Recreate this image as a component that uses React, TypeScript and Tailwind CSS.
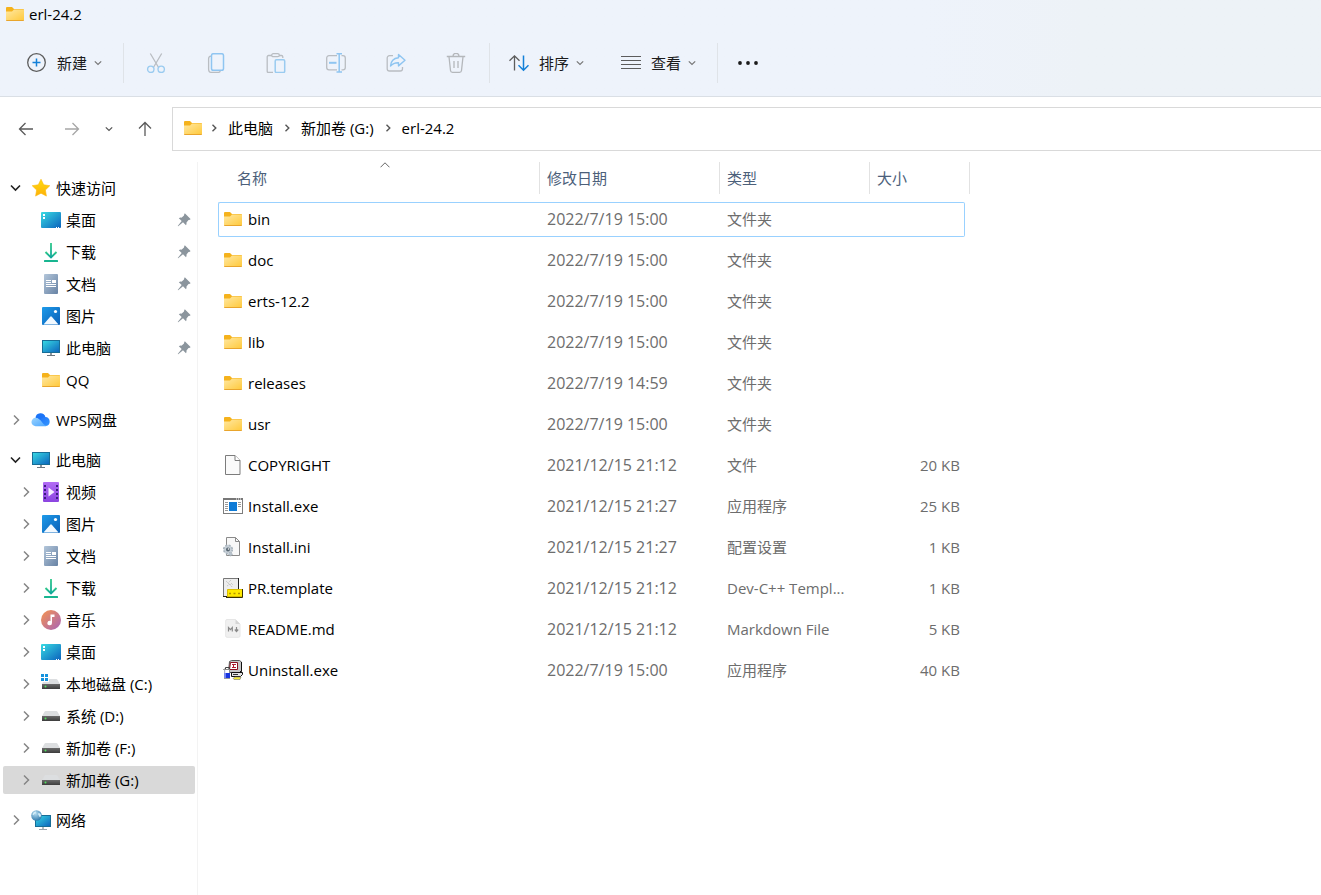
import type { ReactNode } from "react";
import clsx from "clsx";

type IconProps = { className?: string };

type SvgProps = IconProps & { children: ReactNode; size?: number };

function Svg({ children, className, size = 20 }: SvgProps) {
  return (
    <svg
      viewBox={`0 0 ${size} ${size}`}
      width={size}
      height={size}
      fill="none"
      aria-hidden="true"
      className={clsx("shrink-0", className)}
    >
      {children}
    </svg>
  );
}

/* Shared gradients, referenced by id from the icons below */
function Gradients() {
  return (
    <svg width="0" height="0" className="absolute" aria-hidden="true">
      <defs>
        <linearGradient id="folder" x1="0" y1="0" x2="1" y2="1">
          <stop offset="0" stopColor="#ffe8a3" />
          <stop offset="1" stopColor="#ffca3e" />
        </linearGradient>
        <linearGradient id="screen" x1="0" y1="0" x2="1" y2="1">
          <stop offset="0" stopColor="#38dbe3" />
          <stop offset="1" stopColor="#0c62bd" />
        </linearGradient>
        <linearGradient id="star" x1="0" y1="0" x2="0" y2="1">
          <stop offset="0" stopColor="#ffdc0c" />
          <stop offset="1" stopColor="#fdb00a" />
        </linearGradient>
        <linearGradient id="download" x1="0" y1="0" x2="0" y2="1">
          <stop offset="0" stopColor="#2fc98a" />
          <stop offset="1" stopColor="#0fa69a" />
        </linearGradient>
        <linearGradient id="doc" x1="0" y1="0" x2="1" y2="1">
          <stop offset="0" stopColor="#b3c6da" />
          <stop offset="1" stopColor="#6782a4" />
        </linearGradient>
        <linearGradient id="picture" x1="0" y1="0" x2="1" y2="1">
          <stop offset="0" stopColor="#1d9bea" />
          <stop offset="1" stopColor="#0b5fb6" />
        </linearGradient>
        <linearGradient id="video" x1="0" y1="0" x2="0" y2="1">
          <stop offset="0" stopColor="#b26cf5" />
          <stop offset="1" stopColor="#8b44e0" />
        </linearGradient>
        <linearGradient id="music" x1="0" y1="0" x2="1" y2="1">
          <stop offset="0" stopColor="#f6944f" />
          <stop offset="1" stopColor="#a763b8" />
        </linearGradient>
        <linearGradient id="cloud" x1="0" y1="0" x2="1" y2="1">
          <stop offset="0" stopColor="#1566f5" />
          <stop offset="1" stopColor="#3597ff" />
        </linearGradient>
        <linearGradient id="cloudLight" x1="0" y1="0" x2="1" y2="1">
          <stop offset="0" stopColor="#9ad4ff" />
          <stop offset="1" stopColor="#4aa5ff" />
        </linearGradient>
        <linearGradient id="drive" x1="0" y1="0" x2="0" y2="1">
          <stop offset="0" stopColor="#6a6a6a" />
          <stop offset="1" stopColor="#3c3c3c" />
        </linearGradient>
        <radialGradient id="globe" cx="0.4" cy="0.3" r="0.8">
          <stop offset="0" stopColor="#b9dff2" />
          <stop offset="1" stopColor="#1f6ea5" />
        </radialGradient>
      </defs>
    </svg>
  );
}

function FolderIcon({ className }: IconProps) {
  return (
    <Svg className={className}>
      <path d="M1 4a1 1 0 0 1 1-1h5l2 2h9a1 1 0 0 1 1 1v2H1z" fill="#f5b21c" />
      <path d="M1 7.5h6L9 5.5h9.5a.5.5 0 0 1 .5.5V16H1z" fill="url(#folder)" />
      <path d="M1 16h18v.2a.8.8 0 0 1-.8.8H1.8a.8.8 0 0 1-.8-.8z" fill="#e9a52c" />
    </Svg>
  );
}

function StarIcon() {
  return (
    <Svg>
      <path
        d="M10 1.2l2.7 5.6 6.1.9-4.400 4.300 1 6.100-5.400-2.900-5.400 2.900 1-6.100L1.200 7.700l6.100-.9z"
        fill="url(#star)"
        stroke="#fcb90b"
        strokeWidth="0.6"
        strokeLinejoin="round"
      />
    </Svg>
  );
}

function DesktopIcon() {
  return (
    <Svg>
      <rect x="0" y="2" width="20" height="16" rx="1" fill="url(#screen)" />
      <path d="M2 4h2v2H2zM2 7h2v2H2z" fill="#fff" />
      <path d="M15 17.500h1M17 17.500h1" stroke="#fff" />
    </Svg>
  );
}

function DownloadIcon() {
  return (
    <Svg>
      <path d="M4.500 10L10 15.500 15.500 10" stroke="url(#download)" strokeWidth="1.900" />
      <path d="M9.100 1h1.800v14H9.100z" fill="url(#download)" />
      <rect x="3" y="18" width="14" height="2" rx="0.500" fill="#18b590" />
    </Svg>
  );
}

function DocumentIcon() {
  return (
    <Svg>
      <rect x="3" y="0" width="14" height="20" rx="1" fill="url(#doc)" />
      <path d="M5 6.500h5M5 8.500h5M5 10.500h10M5 12.500h10" stroke="#fff" />
      <path d="M11 6h4v3h-4z" fill="#fff" />
    </Svg>
  );
}

function PictureIcon() {
  return (
    <Svg>
      <rect x="1" y="1" width="18" height="18" rx="1" fill="url(#picture)" />
      <path d="M2.500 18.500l6.700-7.700a1 1 0 0 1 1.600 0l6.700 7.700z" fill="#f2f9ff" />
      <circle cx="14.500" cy="5.500" r="1.600" fill="#fff" />
    </Svg>
  );
}

function ComputerIcon() {
  return (
    <Svg>
      <rect x="1.500" y="2.500" width="17" height="12" fill="url(#screen)" stroke="#176d96" />
      <path d="M9 15h2v2H9z" fill="#8b959d" />
      <path d="M6 17.500h8" stroke="#6b757d" />
    </Svg>
  );
}

function CloudIcon() {
  return (
    <Svg>
      <path d="M5 7.500A5 5 0 0 1 14.300 7a4.600 4.600 0 0 1 .7 9.100H9z" fill="url(#cloud)" />
      <path
        d="M4.800 16.200a4.200 4.200 0 0 1-.3-8.400c2.800-.2 4 1.200 5.600 3.200 1.800 2.300 3.200 4.600 6 4.700-1 .5-1.800.5-2.600.5z"
        fill="url(#cloudLight)"
      />
      <path d="M4.500 7.800A5 5 0 0 1 14.300 7c-2.500-.2-4 1-5.300 2.700C7.800 8.400 6.500 7.600 4.500 7.800z" fill="#1b74f7" />
    </Svg>
  );
}

function VideoIcon() {
  return (
    <Svg>
      <rect x="2" y="0" width="16" height="20" rx="1" fill="url(#video)" />
      <path d="M4 3v15M16 3v15" stroke="#3c1c80" strokeWidth="2" strokeDasharray="2 2" />
      <path d="M7.500 5.500v9l6-4.500z" fill="#f6efff" />
    </Svg>
  );
}

function MusicIcon() {
  return (
    <Svg>
      <circle cx="10" cy="10" r="10" fill="url(#music)" />
      <path d="M9.500 4.500h4V7H11v6a2.300 2.300 0 1 1-1.500-2.100z" fill="#fff" />
    </Svg>
  );
}

function DriveIcon() {
  return (
    <Svg>
      <path d="M4.500 5h11a1 1 0 0 1 .8.400L19 10H1l2.700-4.600A1 1 0 0 1 4.500 5z" fill="#dcdee0" />
      <rect x="1" y="10" width="18" height="5" fill="url(#drive)" />
      <circle cx="4.500" cy="12.500" r="1" fill="#4fe05c" />
    </Svg>
  );
}

function SystemDriveIcon() {
  return (
    <Svg>
      <path d="M8 5h7.500a1 1 0 0 1 .8.400L19 10H1l1-2h6z" fill="#dcdee0" />
      <rect x="1" y="10" width="18" height="5" fill="url(#drive)" />
      <circle cx="4.500" cy="12.500" r="1" fill="#4fe05c" />
      <path d="M0 0h3v3H0zM4 0h3v3H4zM0 4h3v3H0zM4 4h3v3H4z" fill="#1492dd" />
    </Svg>
  );
}

function NetworkIcon() {
  return (
    <Svg>
      <rect x="4.500" y="5.500" width="15" height="11" fill="url(#screen)" stroke="#176d96" />
      <path d="M11 17h2v2h-2z" fill="#b3bbc1" />
      <path d="M8 19.500h8" stroke="#9aa5ad" />
      <circle cx="5.500" cy="5.500" r="5.300" fill="url(#globe)" />
      <path d="M1.500 4.500c.5-2 2-3 3.500-3 .5 1-.5 2-1.500 2.500S3 6 1.500 4.500zM7.500 3c1.500 0 2.500 1 2.500 2.500S8.500 7.500 8 6s-1.500-1.500-.5-3z" fill="#d3ecf7" />
    </Svg>
  );
}

function PinIcon() {
  return (
    <Svg size={14} className="ml-auto mr-1">
      <path
        d="M8.300.7l5 5c.3.4.1.9-.3 1l-1.500.3-2 2.500c.2 1 0 1.900-.5 2.700L6 9.300l-4.800 4L.7 13l4-4.900-2.900-2.900c.8-.5 1.700-.7 2.700-.5L7 2.500 7.300 1c.1-.4.6-.6 1-.3z"
        fill="#8b959d"
      />
    </Svg>
  );
}

function ChevronRight({ className }: IconProps) {
  return (
    <Svg className={className}>
      <path d="M8 5.500l4.500 4.500L8 14.500" stroke="currentColor" strokeWidth="1.500" />
    </Svg>
  );
}

function ChevronDown({ className }: IconProps) {
  return (
    <Svg className={className}>
      <path d="M5 7.500L9.500 12 14 7.500" stroke="currentColor" strokeWidth="1.600" />
    </Svg>
  );
}

function SmallChevronDown({ className }: IconProps) {
  return (
    <Svg size={8} className={className}>
      <path d="M.8 2.300L4 5.500l3.200-3.200" stroke="currentColor" strokeWidth="1.200" />
    </Svg>
  );
}

function CrumbChevron() {
  return (
    <Svg size={8} className="text-[#555]">
      <path d="M2.500.8L5.800 4 2.500 7.200" stroke="currentColor" strokeWidth="1.400" />
    </Svg>
  );
}

/* Toolbar glyphs: grey outline, light blue accent */
function NewIcon() {
  return (
    <Svg>
      <circle cx="10.500" cy="9.500" r="8.800" stroke="#5c5c5c" strokeWidth="1.300" />
      <path d="M10.500 5.500v8M6.500 9.500h8" stroke="#1380d8" strokeWidth="1.500" />
    </Svg>
  );
}

function CutIcon() {
  return (
    <Svg>
      <path d="M4.300.5l8.300 14M15.700.5l-8.300 14" stroke="#b9bdc2" strokeWidth="1.300" />
      <circle cx="4.800" cy="16.300" r="3.200" stroke="#9acbf0" strokeWidth="1.400" />
      <circle cx="15.200" cy="16.300" r="3.200" stroke="#9acbf0" strokeWidth="1.400" />
    </Svg>
  );
}

function CopyIcon() {
  return (
    <Svg>
      <path d="M5 3.200c-1.600.2-2.400 1-2.400 2.500v10.500c0 2 1 3.200 3.200 3.200h6.500c1 0 1.700-.5 2-1.400" stroke="#b9bdc2" strokeWidth="1.300" />
      <rect x="5.500" y=".7" width="12" height="16.500" rx="1.800" stroke="#8fc5f1" strokeWidth="1.500" />
    </Svg>
  );
}

function PasteIcon() {
  return (
    <Svg>
      <path d="M6 2.500H2.500A1.300 1.300 0 0 0 1.200 3.800v14.400a1.300 1.300 0 0 0 1.300 1.300H7M13 2.500h2.500a1.300 1.300 0 0 1 1.300 1.200V5" stroke="#b9bdc2" strokeWidth="1.300" />
      <rect x="5.700" y=".7" width="7.600" height="3" rx="1.500" stroke="#b9bdc2" strokeWidth="1.300" />
      <rect x="9.200" y="6.700" width="9.500" height="12.800" rx="1.200" stroke="#9acbf0" strokeWidth="1.500" />
    </Svg>
  );
}

function RenameIcon() {
  return (
    <Svg>
      <path d="M11 2.700H3A2.300 2.300 0 0 0 .7 5v9.500A2.300 2.300 0 0 0 3 16.800h8M15.500 2.700H17A2.300 2.300 0 0 1 19.300 5v9.500a2.300 2.300 0 0 1-2.300 2.300h-1.500" stroke="#b9bdc2" strokeWidth="1.300" />
      <path d="M3 9.800h7.500" stroke="#8fc5f1" strokeWidth="2" />
      <path d="M10.500.7H16M10.500 19H16M13.200.7V19" stroke="#8fc5f1" strokeWidth="1.500" />
    </Svg>
  );
}

function ShareIcon() {
  return (
    <Svg>
      <path d="M7 2.700H3.500A2.300 2.300 0 0 0 1.200 5v10.700A2.300 2.300 0 0 0 3.500 18h10.700a2.300 2.300 0 0 0 2.300-2.300V14" stroke="#b9bdc2" strokeWidth="1.300" />
      <path
        d="M12.500 1.500L19 7.300l-6.500 5.600V9.700C9 9.500 6.700 10.500 4.500 13c.3-4.500 3-7.800 8-8.300z"
        stroke="#8fc5f1"
        strokeWidth="1.400"
        strokeLinejoin="round"
      />
    </Svg>
  );
}

function DeleteIcon() {
  return (
    <Svg>
      <path d="M.8 3.500h18.400M7 3.300a3 3 0 0 1 6 0M3 3.700l1.500 13.800a2 2 0 0 0 2 1.800h7a2 2 0 0 0 2-1.800L17 3.700M8 8v7M12 8v7" stroke="#b4b7bb" strokeWidth="1.300" />
    </Svg>
  );
}

function SortIcon() {
  return (
    <Svg>
      <path d="M5.500 17.500V2.800M.5 7.800l5-5 5 5" stroke="#5c5c5c" strokeWidth="1.300" />
      <path d="M14.500 2.500v14.700M9.500 12.200l5 5 5-5" stroke="#1380d8" strokeWidth="1.500" />
    </Svg>
  );
}

function ViewIcon() {
  return (
    <Svg>
      <path d="M0 3.500h20M0 7.500h20M0 11.500h20M0 15.500h20" stroke="#5c5c5c" />
    </Svg>
  );
}

function MoreIcon() {
  return (
    <Svg>
      <circle cx="2" cy="10" r="1.900" fill="#1b1b1b" />
      <circle cx="10" cy="10" r="1.900" fill="#1b1b1b" />
      <circle cx="18" cy="10" r="1.900" fill="#1b1b1b" />
    </Svg>
  );
}

function ArrowIcon({ className }: IconProps) {
  return (
    <Svg size={16} className={className}>
      <path d="M15 8H1.500M7.500 2l-6 6 6 6" stroke="currentColor" strokeWidth="1.300" />
    </Svg>
  );
}

/* File type icons */
function FileIcon() {
  return (
    <Svg>
      <path d="M2.500.5H12l5 5v14H2.500z" fill="#fafafa" stroke="#7c7c7c" />
      <path d="M12 .5v5h5" fill="#fff" stroke="#7c7c7c" />
    </Svg>
  );
}

function ExeIcon() {
  return (
    <Svg>
      <rect x=".5" y="2.500" width="19" height="15" fill="#fff" stroke="#7d7d7d" />
      <path d="M0 3h20" stroke="#777" strokeWidth="2" />
      <path d="M13 3h1M15 3h1M17 3h1" stroke="#fff" />
      <path d="M2 6.500h3M2 8.500h3M2 10.500h3M2 12.500h3M2 14.500h3M15 6.500h3M15 8.500h3M15 10.500h3" stroke="#999" />
      <rect x="6" y="6" width="8" height="9" fill="#0f7bd6" />
    </Svg>
  );
}

function IniIcon() {
  return (
    <Svg>
      <path d="M3.500.5h9l4 4v14h-13z" fill="#f8f8f8" stroke="#8a8a8a" />
      <path d="M12.500.5v4h4" stroke="#8a8a8a" />
      <circle cx="5" cy="12.500" r="4.300" fill="#c7d0d8" stroke="#a9b4bd" strokeWidth="1.600" strokeDasharray="2 1.400" />
      <circle cx="5" cy="12.500" r="2" fill="#566470" />
      <circle cx="5.500" cy="12" r=".8" fill="#fff" />
      <circle cx="7.500" cy="17" r="1.800" fill="#b9c4cd" stroke="#a4afb8" strokeDasharray="1 1" />
    </Svg>
  );
}

function TemplateIcon() {
  return (
    <Svg>
      <path d="M.5.5h15v18H.5z" fill="#ededed" stroke="#777" />
      <path d="M15.500 0v11M0 18.500h4" stroke="#222" />
      <path d="M3 3l2 2 3-3M5 5l3 3M4 8l3-2 2 3M8 5l2 2" stroke="#bcbcbc" strokeDasharray="1 1" />
      <path d="M4.500 11.500h15v7h-15z" fill="#ffea00" stroke="#d8bc00" />
      <path d="M19.500 11v8.500H3" stroke="#3c3300" />
      <path d="M6 15.500h2M10.500 15.500h2M15 15.500h2" stroke="#b39400" strokeWidth="1.400" />
    </Svg>
  );
}

function MarkdownIcon() {
  return (
    <Svg>
      <path d="M4 .5h8.500L17 5v12a1.300 1.300 0 0 1-1.300 1.300H4A1.300 1.300 0 0 1 2.700 17V1.800A1.300 1.300 0 0 1 4 .5z" fill="#f0f0f0" stroke="#e6e6e6" />
      <path d="M12.500.5V5H17z" fill="#d5d5d5" />
      <path d="M5.500 12.500v-4l1.900 2.200 1.900-2.200v4M13.500 8v4M11.800 10.500l1.700 2 1.700-2" stroke="#8a8a8a" strokeWidth="1.200" />
    </Svg>
  );
}

function UninstallIcon() {
  return (
    <Svg>
      {/* monitor */}
      <path d="M6.500 1.500l2-1h8l2 1.500v9l-2 1.500h-11z" fill="#c6c6c6" stroke="#555" />
      <path d="M18.500 2v9.500H17" stroke="#111" />
      <path d="M7.500 2.500h7v7h-8z" fill="#fff" stroke="#8b1020" />
      <path d="M9 4.500h4M9 7.500h4M10.500 4.500v3" stroke="#b0182c" />
      {/* case */}
      <path d="M8.500 12.500h11v2l-2 2h-9z" fill="#e4e4e4" stroke="#111" />
      <path d="M10 14.500h5" stroke="#333" />
      {/* disc */}
      <path d="M10 18.500l2-1.500h6l-1 2.500h-6z" fill="#f4ec3a" stroke="#777" strokeWidth=".6" />
      {/* spray bottle */}
      <path d="M2.500 9.500v-2h4v2M2 8.500L.5 10" stroke="#444" />
      <path d="M1.500 9.500h5v4h-5z" fill="#fff" stroke="#8c8c8c" />
      <path d="M1 13h6v5H1z" fill="#1733e0" />
      <path d="M2 10v9" stroke="#cfd6ff" />
      <path d="M1 18.500h6" stroke="#999" />
    </Svg>
  );
}

type NavItem = {
  label: string;
  icon: () => ReactNode;
  level?: 0 | 1;
  state?: "open" | "closed";
  pinned?: boolean;
  selected?: boolean;
};

const folderIcon = () => <FolderIcon />;

const navGroups: NavItem[][] = [
  [
    { label: "快速访问", icon: StarIcon, level: 0, state: "open" },
    { label: "桌面", icon: DesktopIcon, pinned: true },
    { label: "下载", icon: DownloadIcon, pinned: true },
    { label: "文档", icon: DocumentIcon, pinned: true },
    { label: "图片", icon: PictureIcon, pinned: true },
    { label: "此电脑", icon: ComputerIcon, pinned: true },
    { label: "QQ", icon: folderIcon },
  ],
  [{ label: "WPS网盘", icon: CloudIcon, level: 0, state: "closed" }],
  [
    { label: "此电脑", icon: ComputerIcon, level: 0, state: "open" },
    { label: "视频", icon: VideoIcon, state: "closed" },
    { label: "图片", icon: PictureIcon, state: "closed" },
    { label: "文档", icon: DocumentIcon, state: "closed" },
    { label: "下载", icon: DownloadIcon, state: "closed" },
    { label: "音乐", icon: MusicIcon, state: "closed" },
    { label: "桌面", icon: DesktopIcon, state: "closed" },
    { label: "本地磁盘 (C:)", icon: SystemDriveIcon, state: "closed" },
    { label: "系统 (D:)", icon: DriveIcon, state: "closed" },
    { label: "新加卷 (F:)", icon: DriveIcon, state: "closed" },
    { label: "新加卷 (G:)", icon: DriveIcon, state: "closed", selected: true },
  ],
  [{ label: "网络", icon: NetworkIcon, level: 0, state: "closed" }],
];

type FileRow = {
  name: string;
  date: string;
  type: string;
  size?: string;
  icon: () => ReactNode;
};

const files: FileRow[] = [
  { name: "bin", date: "2022/7/19 15:00", type: "文件夹", icon: folderIcon },
  { name: "doc", date: "2022/7/19 15:00", type: "文件夹", icon: folderIcon },
  { name: "erts-12.2", date: "2022/7/19 15:00", type: "文件夹", icon: folderIcon },
  { name: "lib", date: "2022/7/19 15:00", type: "文件夹", icon: folderIcon },
  { name: "releases", date: "2022/7/19 14:59", type: "文件夹", icon: folderIcon },
  { name: "usr", date: "2022/7/19 15:00", type: "文件夹", icon: folderIcon },
  { name: "COPYRIGHT", date: "2021/12/15 21:12", type: "文件", size: "20 KB", icon: FileIcon },
  { name: "Install.exe", date: "2021/12/15 21:27", type: "应用程序", size: "25 KB", icon: ExeIcon },
  { name: "Install.ini", date: "2021/12/15 21:27", type: "配置设置", size: "1 KB", icon: IniIcon },
  { name: "PR.template", date: "2021/12/15 21:12", type: "Dev-C++ Templ...", size: "1 KB", icon: TemplateIcon },
  { name: "README.md", date: "2021/12/15 21:12", type: "Markdown File", size: "5 KB", icon: MarkdownIcon },
  { name: "Uninstall.exe", date: "2022/7/19 15:00", type: "应用程序", size: "40 KB", icon: UninstallIcon },
];

const editActions = [
  { label: "剪切", icon: CutIcon },
  { label: "复制", icon: CopyIcon },
  { label: "粘贴", icon: PasteIcon },
  { label: "重命名", icon: RenameIcon },
  { label: "共享", icon: ShareIcon },
  { label: "删除", icon: DeleteIcon },
];

function Divider() {
  return <div className="h-10 w-px bg-[#dfe3e8]" />;
}

function Toolbar() {
  return (
    <div role="toolbar" className="mt-[2px] flex h-[66px] items-center text-[#1b1b1b]">
      <button type="button" className="flex h-10 items-center pl-[26px] pr-[21px]">
        <NewIcon />
        <span className="ml-[11px] mr-[7px]">新建</span>
        <SmallChevronDown className="text-[#777]" />
      </button>
      <Divider />
      <div className="ml-[2px] mr-[3px] flex">
        {editActions.map(({ label, icon: Icon }) => (
          <button
            key={label}
            type="button"
            disabled
            aria-label={label}
            className="flex h-10 w-[60px] items-center justify-center"
          >
            <Icon />
          </button>
        ))}
      </div>
      <Divider />
      <button type="button" className="flex h-10 items-center pl-[19px] pr-[18px]">
        <SortIcon />
        <span className="ml-[10px] mr-[7px]">排序</span>
        <SmallChevronDown className="text-[#777]" />
      </button>
      <button type="button" className="flex h-10 items-center pl-[19px] pr-[21px]">
        <ViewIcon />
        <span className="ml-[10px] mr-[7px]">查看</span>
        <SmallChevronDown className="text-[#777]" />
      </button>
      <Divider />
      <button type="button" aria-label="更多" className="flex h-10 items-center px-5">
        <MoreIcon />
      </button>
    </div>
  );
}

function AddressBar() {
  return (
    <div className="flex items-center pt-[10px]">
      <div className="flex w-[172px] items-center">
        <button type="button" aria-label="后退" className="ml-[18px] text-[#5a5a5a]">
          <ArrowIcon />
        </button>
        <button type="button" aria-label="前进" disabled className="ml-[30px] text-[#a6a6a6]">
          <ArrowIcon className="rotate-180" />
        </button>
        <button type="button" aria-label="最近浏览的位置" className="ml-[25px] text-[#555]">
          <SmallChevronDown />
        </button>
        <button type="button" aria-label="上移" className="ml-6 text-[#5a5a5a]">
          <ArrowIcon className="rotate-90" />
        </button>
      </div>
      <nav
        aria-label="地址"
        className="flex h-11 flex-1 items-center gap-[10px] border border-r-0 border-[#d9d9d9] pb-[2px] pl-[10px]"
      >
        <FolderIcon className="-mr-[3px]" />
        <CrumbChevron />
        <a href="#pc">此电脑</a>
        <CrumbChevron />
        <a href="#g">新加卷 (G:)</a>
        <CrumbChevron />
        <a href="#erl">erl-24.2</a>
      </nav>
    </div>
  );
}

function NavRow({ item }: { item: NavItem }) {
  const { label, icon: Icon, level = 1, state, pinned, selected } = item;

  return (
    <li>
      <button
        type="button"
        aria-expanded={state ? state === "open" : undefined}
        className={clsx(
          "flex h-7 w-full items-center gap-[5px] rounded-[2px] text-left",
          level === 0 ? "pl-[3px]" : "pl-[13px]",
          selected && "bg-[#d9d9d9]",
        )}
      >
        <span className="w-5 shrink-0">
          {state === "open" ? <ChevronDown className="text-[#222]" /> : null}
          {state === "closed" ? <ChevronRight className="text-[#858585]" /> : null}
        </span>
        <Icon />
        <span className="whitespace-nowrap">{label}</span>
        {pinned ? <PinIcon /> : null}
      </button>
    </li>
  );
}

function Sidebar() {
  return (
    <aside className="mt-[11px] flex w-[198px] shrink-0 flex-col gap-3 border-r border-[#f3f3f3] pl-[3px] pr-[2px] pt-3">
      {navGroups.map((group) => (
        <ul key={group[0].label} className="flex flex-col gap-1">
          {group.map((item) => (
            <NavRow key={item.label} item={item} />
          ))}
        </ul>
      ))}
    </aside>
  );
}

function FileTable() {
  const th = "h-[34px] p-0 text-left align-top font-normal";
  const thButton = "h-8 w-full border-r border-[#e2e2e2] px-[7px] text-left";

  return (
    <table className="w-[752px] table-fixed border-separate border-spacing-x-0 border-spacing-y-[6px]">
      <colgroup>
        <col className="w-[322px]" />
        <col className="w-[180px]" />
        <col className="w-[150px]" />
        <col />
        <col className="w-[5px]" />
      </colgroup>
      <thead className="text-[#4c607a]">
        <tr>
          <th className={clsx(th, "pl-3")} aria-sort="ascending">
            <button type="button" className={clsx(thButton, "relative")}>
              名称
              <svg
                viewBox="0 0 10 6"
                width="10"
                height="6"
                fill="none"
                aria-hidden="true"
                className="absolute left-1/2 top-0 -translate-x-1/2"
              >
                <path d="M.5 5.300L5 .8l4.500 4.500" stroke="#666" />
              </svg>
            </button>
          </th>
          <th className={th}>
            <button type="button" className={thButton}>修改日期</button>
          </th>
          <th className={th}>
            <button type="button" className={thButton}>类型</button>
          </th>
          <th className={th} colSpan={2}>
            <button type="button" className={thButton}>大小</button>
          </th>
        </tr>
      </thead>
      <tbody className="text-[#6d6d6d]">
        {files.map(({ name, date, type, size, icon: Icon }, i) => {
          const cell = clsx("h-[35px] border-y pt-0 pb-[2px]", i === 0 ? "border-[#99d1ff]" : "border-transparent");

          return (
            <tr key={name}>
              <td className={clsx(cell, "rounded-l-[2px] border-l pl-1 pr-0")}>
                <div className="flex items-center gap-[5px] text-black">
                  <Icon />
                  {name}
                </div>
              </td>
              <td className={clsx(cell, "px-[7px] text-base leading-5")}>{date}</td>
              <td className={clsx(cell, "whitespace-nowrap px-[7px]")}>{type}</td>
              <td className={clsx(cell, "rounded-r-[2px] border-r pl-0 pr-1 text-right")}>{size}</td>
              <td className="p-0" />
            </tr>
          );
        })}
      </tbody>
    </table>
  );
}

export default function App() {
  return (
    <div className="flex min-h-screen flex-col bg-white font-['Open_Sans','Noto_Sans_CJK_SC',sans-serif] text-[15px] leading-5 text-black">
      <Gradients />
      <header className="border-b border-[#dadfe5] bg-linear-to-r from-[#eef3fb] from-70% to-[#edf2f7] to-82%">
        <div className="flex h-7 items-center gap-1 pl-[5px]">
          <FolderIcon />
          <h1>erl-24.2</h1>
        </div>
        <Toolbar />
      </header>
      <AddressBar />
      <div className="flex flex-1">
        <Sidebar />
        <main className="min-w-0 flex-1 pl-5 pt-[5px]">
          <FileTable />
        </main>
      </div>
    </div>
  );
}
